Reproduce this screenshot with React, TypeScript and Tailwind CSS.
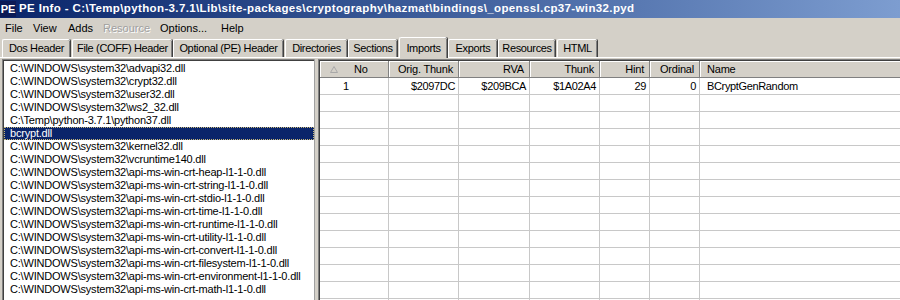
const FONT = "font-['Liberation_Sans',Arial,sans-serif]";

const menus = [
  { label: 'File', w: 'w-[28px]' },
  { label: 'View', w: 'w-[35px]' },
  { label: 'Adds', w: 'w-[35px]' },
  { label: 'Resource', w: 'w-[57px]', disabled: true },
  { label: 'Options...', w: 'w-[61px]' },
  { label: 'Help', w: 'w-[40px]' },
];

const tabs = [
  { label: 'Dos Header', cls: 'ml-[2px] w-[68px]' },
  { label: 'File (COFF) Header', cls: 'ml-[2px] w-[100px]' },
  { label: 'Optional (PE) Header', cls: 'ml-[1px] w-[110px]' },
  { label: 'Directories', cls: 'ml-[2px] w-[62px]' },
  { label: 'Sections', cls: 'ml-[1px] w-[49px]' },
  { label: 'Imports', cls: 'ml-[2px] w-[48px]', active: true },
  { label: 'Exports', cls: 'ml-[1px] w-[49px]' },
  { label: 'Resources', cls: 'ml-[1px] w-[57px]' },
  { label: 'HTML', cls: 'ml-[2px] w-[40px]' },
];

const dlls = [
  'C:\\WINDOWS\\system32\\advapi32.dll',
  'C:\\WINDOWS\\system32\\crypt32.dll',
  'C:\\WINDOWS\\system32\\user32.dll',
  'C:\\WINDOWS\\system32\\ws2_32.dll',
  'C:\\Temp\\python-3.7.1\\python37.dll',
  'bcrypt.dll',
  'C:\\WINDOWS\\system32\\kernel32.dll',
  'C:\\WINDOWS\\system32\\vcruntime140.dll',
  'C:\\WINDOWS\\system32\\api-ms-win-crt-heap-l1-1-0.dll',
  'C:\\WINDOWS\\system32\\api-ms-win-crt-string-l1-1-0.dll',
  'C:\\WINDOWS\\system32\\api-ms-win-crt-stdio-l1-1-0.dll',
  'C:\\WINDOWS\\system32\\api-ms-win-crt-time-l1-1-0.dll',
  'C:\\WINDOWS\\system32\\api-ms-win-crt-runtime-l1-1-0.dll',
  'C:\\WINDOWS\\system32\\api-ms-win-crt-utility-l1-1-0.dll',
  'C:\\WINDOWS\\system32\\api-ms-win-crt-convert-l1-1-0.dll',
  'C:\\WINDOWS\\system32\\api-ms-win-crt-filesystem-l1-1-0.dll',
  'C:\\WINDOWS\\system32\\api-ms-win-crt-environment-l1-1-0.dll',
  'C:\\WINDOWS\\system32\\api-ms-win-crt-math-l1-1-0.dll',
];

// column widths include the separator line
const cols = [
  { key: 'no', label: 'No', w: 'w-[69px]' },
  { key: 'orig', label: 'Orig. Thunk', w: 'w-[70px]' },
  { key: 'rva', label: 'RVA', w: 'w-[71px]' },
  { key: 'thunk', label: 'Thunk', w: 'w-[70px]' },
  { key: 'hint', label: 'Hint', w: 'w-[50px]' },
  { key: 'ord', label: 'Ordinal', w: 'w-[50px]' },
  { key: 'name', label: 'Name', w: 'flex-1' },
];

const rows: string[][] = [
  ['1', '$2097DC', '$209BCA', '$1A02A4', '29', '0', 'BCryptGenRandom'],
];

function SortArrow() {
  return (
    <svg width="8" height="7" viewBox="0 0 8 7" className="shrink-0">
      <path d="M4 0.5 L7.5 6.5 L0.5 6.5 Z" fill="none" stroke="#a8a8a8" strokeWidth="1" />
    </svg>
  );
}

function HeaderCell({ col, idx }: { col: (typeof cols)[number]; idx: number }) {
  const last = idx === cols.length - 1;
  return (
    <div
      className={`${col.w} flex h-full items-center bg-[#d4d0c8] shadow-[inset_1px_1px_0_#ffffff] ${
        last ? '' : 'border-r border-[#808080]'
      } ${idx === 0 ? 'pl-[10px]' : last ? 'pl-[7px]' : 'justify-end pr-[5px]'}`}
    >
      {idx === 0 && <SortArrow />}
      <span className={idx === 0 ? 'ml-[16px]' : ''}>{col.label}</span>
    </div>
  );
}

function DataRow({ cells }: { cells: string[] }) {
  return (
    <div className="flex h-[17px] shrink-0 border-b border-[#c8c8c8] bg-white tracking-[-0.35px]">
      {cols.map((c, i) => {
        const last = i === cols.length - 1;
        const align =
          i === 0 ? 'pl-[23px]' : last ? 'pl-[7px]' : 'justify-end pr-[3px]';
        return (
          <div
            key={c.key}
            className={`${c.w} flex h-full items-center ${align} ${last ? '' : 'border-r border-[#c8c8c8]'}`}
          >
            {cells[i] ?? ''}
          </div>
        );
      })}
    </div>
  );
}

export default function App() {
  const empty = Array.from({ length: 13 }).map(() => [] as string[]);
  return (
    <div className={`flex h-[300px] w-[900px] flex-col overflow-hidden bg-[#d4d0c8] text-[11px] text-black ${FONT}`}>
      {/* title bar */}
      <div className="flex h-[18px] shrink-0 items-center bg-gradient-to-r from-[#0a246a] to-[#7d9dd0] font-bold text-white">
        <div className="flex h-[16px] w-[16px] items-center justify-center bg-[#0c1a55] text-[11px] leading-none">PE</div>
        <span className="ml-[3px] whitespace-nowrap text-[11.5px] tracking-[0.37px]">
          PE Info - C:\Temp\python-3.7.1\Lib\site-packages\cryptography\hazmat\bindings\_openssl.cp37-win32.pyd
        </span>
      </div>

      {/* menu bar */}
      <div className="flex h-[20px] shrink-0 items-center pl-[5px]">
        {menus.map((m) => (
          <span
            key={m.label}
            className={`${m.w} ${m.disabled ? 'text-[#a0a0a0] [text-shadow:1px_1px_0_#ffffff]' : ''}`}
          >
            {m.label}
          </span>
        ))}
      </div>

      {/* tabs */}
      <div className="flex h-[20px] shrink-0 items-end border-b border-white tracking-[-0.35px]">
        {tabs.map((t) =>
          t.active ? (
            <div
              key={t.label}
              className={`${t.cls} relative -mb-px flex h-[21px] items-start justify-center rounded-t-[2px] border-l border-t border-white bg-[#d4d0c8] pt-[2px] shadow-[inset_-1px_0_0_#808080,1px_0_0_#404040]`}
            >
              {t.label}
            </div>
          ) : (
            <div
              key={t.label}
              className={`${t.cls} flex h-[18px] items-center justify-center rounded-t-[2px] border-l border-t border-white shadow-[inset_-1px_0_0_#808080,1px_0_0_#404040]`}
            >
              {t.label}
            </div>
          )
        )}
      </div>

      {/* body */}
      <div className="flex min-h-0 flex-1 pt-px">
        {/* dll list */}
        <div className="ml-[2px] w-[312px] shrink-0 border-l border-t border-[#808080] bg-white pt-[2px] pl-px shadow-[inset_1px_1px_0_#404040]">
          {dlls.map((d) => {
            const sel = d === 'bcrypt.dll';
            return (
              <div
                key={d}
                className={`h-[13px] whitespace-nowrap pl-[6px] leading-[13px] tracking-[-0.2px] ${
                  sel ? 'bg-[#0a246a] text-white outline outline-1 -outline-offset-1 outline-dotted outline-[#c8b878]' : ''
                }`}
              >
                {d}
              </div>
            );
          })}
        </div>

        {/* splitter */}
        <div className="w-[4px] shrink-0 border-l border-[#a0a0a0]" />

        {/* imports grid */}
        <div className="flex min-w-0 flex-1 flex-col border-l border-t border-[#808080] bg-white pl-px pt-px shadow-[inset_1px_1px_0_#404040]">
          <div className="flex h-[17px] shrink-0 border-b border-[#808080] tracking-[-0.2px]">
            {cols.map((c, i) => (
              <HeaderCell key={c.key} col={c} idx={i} />
            ))}
          </div>
          {rows.map((r, i) => (
            <DataRow key={i} cells={r} />
          ))}
          {empty.map((r, i) => (
            <DataRow key={`e${i}`} cells={r} />
          ))}
        </div>
      </div>
    </div>
  );
}
